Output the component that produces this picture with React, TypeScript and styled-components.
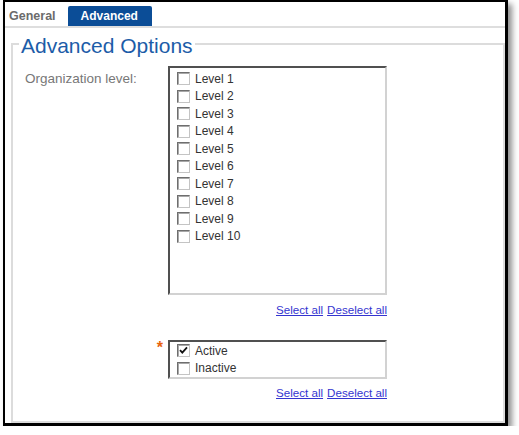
import styled, { createGlobalStyle } from 'styled-components';

const GlobalStyle = createGlobalStyle`
  html, body {
    margin: 0;
    padding: 0;
    background: #ffffff;
    font-family: 'Liberation Sans', Arial, sans-serif;
  }
`;

// --- Moldura e abas ---

const Frame = styled.div`
  box-sizing: border-box;
  margin-left: 3px;
  width: 505px;
  height: 426px;
  border: 2px solid #000;
  border-right-width: 3px;
  border-bottom-width: 3px;
  background: #fff;
  box-shadow: 4px 4px 6px rgba(0, 0, 0, 0.45);
  display: flex;
  flex-direction: column;
`;

const TabBar = styled.div`
  display: flex;
  align-items: flex-end;
  padding: 4px 0 0 4px;
  border-bottom: 2px solid #dedede;
`;

const Tab = styled.div<{ active?: boolean }>`
  height: 20px;
  line-height: 20px;
  font-size: ${({ active }) => (active ? '12px' : '12.5px')};
  font-weight: 700;
  color: ${({ active }) => (active ? '#ffffff' : '#6b6b6b')};
  background: ${({ active }) => (active ? '#0b4d97' : 'transparent')};
  padding: ${({ active }) => (active ? '0 14px 0 13px' : '0 12px 0 0')};
  border-radius: ${({ active }) => (active ? '2px 2px 0 0' : '0')};
`;

// --- Fieldset ---

const Fieldset = styled.fieldset`
  flex: 1;
  margin: 1px 0 0 6px;
  padding: 8px 0 0 12px;
  border: 2px solid #dcdcdc;
  min-width: 0;
`;

const Legend = styled.legend`
  margin-left: -6px;
  padding: 5px 2px 0;
  font-size: 21px;
  line-height: 24px;
  color: #1c5ca8;
`;

const FormGrid = styled.div`
  display: grid;
  grid-template-columns: 143px 219px;
  align-items: start;
`;

const Label = styled.div`
  margin-top: 5px;
  font-size: 13.5px;
  line-height: 16px;
  color: #777;
`;

const Required = styled.div`
  text-align: right;
  padding-right: 5px;
  font-size: 16px;
  font-weight: 700;
  line-height: 16px;
  color: #e8630e;
`;

const ListBox = styled.div<{ tall?: boolean }>`
  box-sizing: border-box;
  height: ${({ tall }) => (tall ? '229px' : '39px')};
  padding: ${({ tall }) => (tall ? '2px 0 0 7px' : '0 0 0 7px')};
  border-top: 2px solid #505050;
  border-left: 2px solid #505050;
  border-right: 2px solid #d2d2d2;
  border-bottom: 2px solid #d2d2d2;
  background: #fff;
`;

const Option = styled.label`
  display: flex;
  align-items: center;
  gap: 5px;
  height: 17.5px;
  font-size: 12px;
  color: #333;
`;

const Box = styled.span`
  box-sizing: border-box;
  width: 13px;
  height: 13px;
  border-top: 1px solid #6e6e6e;
  border-left: 1px solid #6e6e6e;
  border-right: 1px solid #c4c4c4;
  border-bottom: 1px solid #c4c4c4;
  box-shadow: inset 1px 1px 0 #a8a8a8;
  background: #fff;
  display: flex;
  align-items: center;
  justify-content: center;
`;

const Links = styled.div<{ above: number; below?: number }>`
  grid-column: 2;
  display: flex;
  justify-content: flex-end;
  gap: 4px;
  margin: ${({ above }) => above}px 0 ${({ below }) => below ?? 0}px;
  font-size: 11.6px;
  line-height: 15px;
`;

const LinkText = styled.a`
  color: #3434d0;
  text-decoration: underline;
  cursor: pointer;
`;

// --- Componentes ---

const Checkbox = ({ checked, label }: { checked?: boolean; label: string }) => (
  <Option>
    <Box>
      {checked && (
        <svg width="9" height="9" viewBox="0 0 9 9">
          <path d="M1 4.2 L3.3 6.6 L8 1.4" stroke="#111" strokeWidth="1.8" fill="none" />
        </svg>
      )}
    </Box>
    {label}
  </Option>
);

const levels = Array.from({ length: 10 }, (_, i) => `Level ${i + 1}`);

export default function App() {
  return (
    <>
      <GlobalStyle />
      <Frame>
        <TabBar>
          <Tab>General</Tab>
          <Tab active>Advanced</Tab>
        </TabBar>
        <Fieldset>
          <Legend>Advanced Options</Legend>
          <FormGrid>
            <Label>Organization level:</Label>
            <ListBox tall>
              {levels.map(l => (
                <Checkbox key={l} label={l} />
              ))}
            </ListBox>
            <Links above={7} below={23}>
              <LinkText>Select all</LinkText>
              <LinkText>Deselect all</LinkText>
            </Links>

            <Required>*</Required>
            <ListBox>
              <Checkbox checked label="Active" />
              <Checkbox label="Inactive" />
            </ListBox>
            <Links above={6}>
              <LinkText>Select all</LinkText>
              <LinkText>Deselect all</LinkText>
            </Links>
          </FormGrid>
        </Fieldset>
      </Frame>
    </>
  );
}
